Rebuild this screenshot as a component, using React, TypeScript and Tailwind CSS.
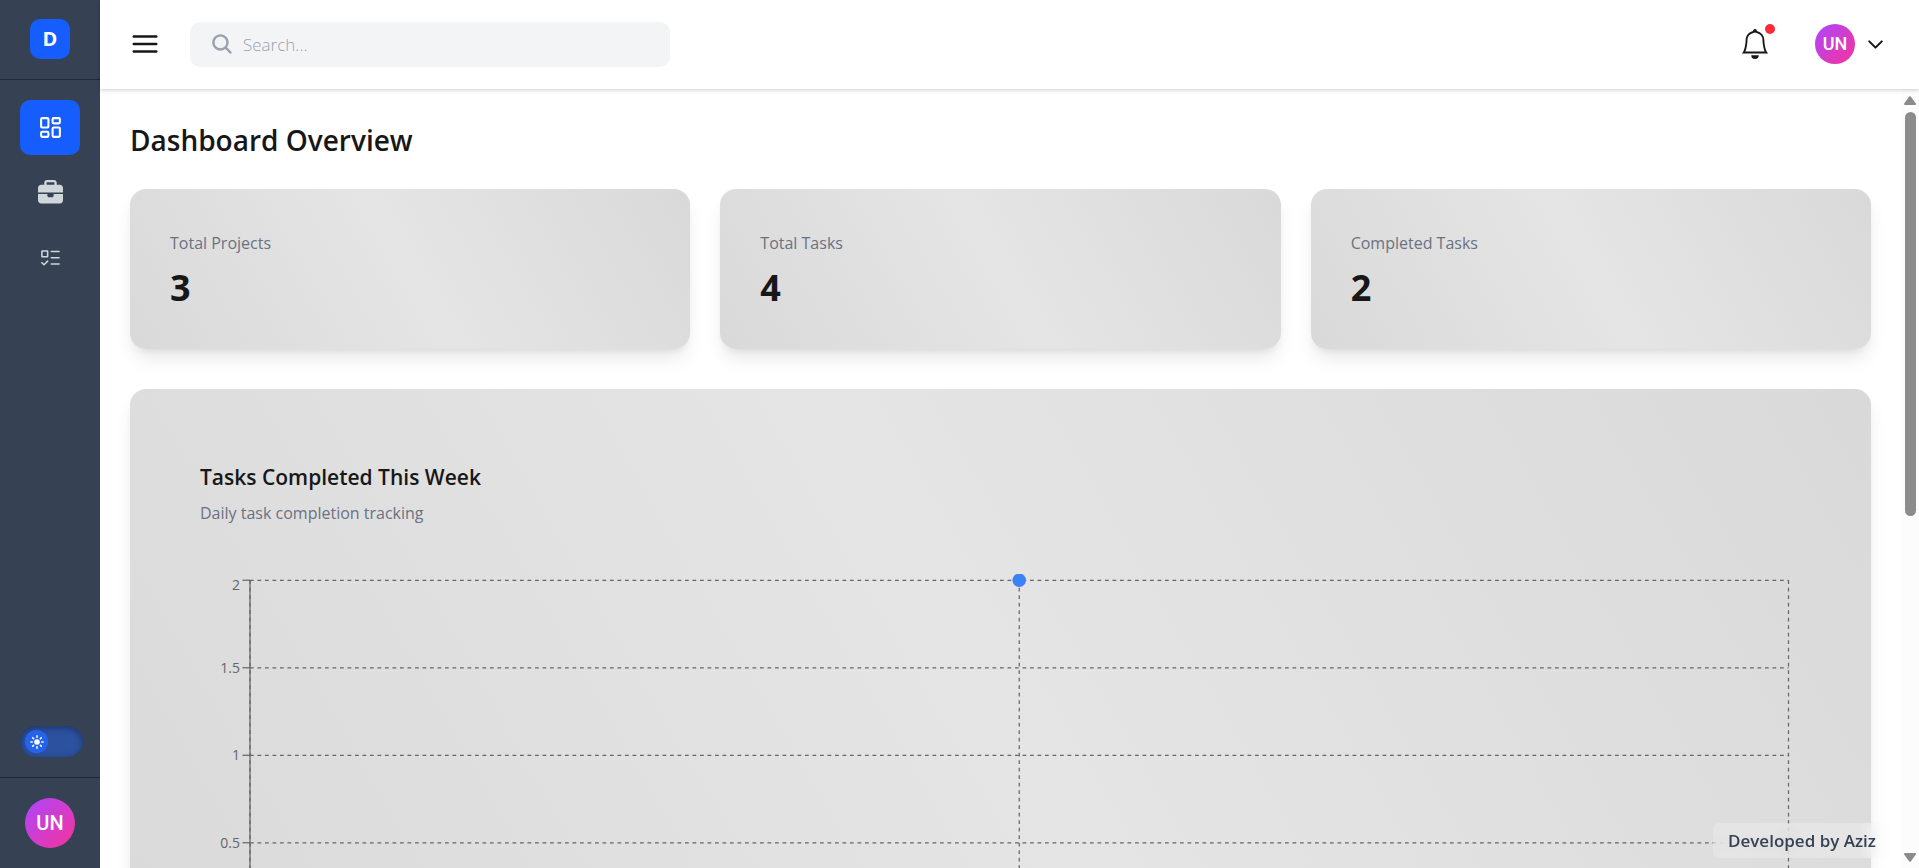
import { useEffect, useRef, useState } from 'react';
import { BsBell } from 'react-icons/bs';
import { FaBriefcase } from 'react-icons/fa6';
import { FiChevronDown, FiMenu } from 'react-icons/fi';
import { GoTasklist } from 'react-icons/go';
import { IoSearch } from 'react-icons/io5';
import { LuLayoutDashboard } from 'react-icons/lu';

const navItems = [
  { label: 'Dashboard', href: '#dashboard', icon: <LuLayoutDashboard size={25} />, active: true },
  { label: 'Projects', href: '#projects', icon: <FaBriefcase size={25} />, active: false },
  { label: 'Tasks', href: '#tasks', icon: <GoTasklist size={25} />, active: false },
];

const stats = [
  { label: 'Total Projects', value: 3 },
  { label: 'Total Tasks', value: 4 },
  { label: 'Completed Tasks', value: 2 },
];

const cardClass =
  'rounded-2xl bg-[linear-gradient(60deg,#d9d9d9,#e5e5e5,#d9d9d9)] shadow-[0_12px_19px_-4px_rgba(0,0,0,0.1),0_5px_8px_-5px_rgba(0,0,0,0.1)]';

const avatarClass =
  "flex items-center justify-center rounded-full bg-[linear-gradient(135deg,#ad46ff,#f6339a)] font-['Roboto'] font-medium text-white";

function SunIcon() {
  return (
    <svg width="14" height="14" viewBox="0 0 24 24" stroke="white" strokeWidth="2.6" strokeLinecap="round" aria-hidden="true">
      <circle cx="12" cy="12" r="4.8" fill="white" stroke="none" />
      <path d="M12 1.5v2.4M12 20.1v2.4M1.5 12h2.4M20.1 12h2.4M4.6 4.6l1.6 1.6M17.8 17.8l1.6 1.6M4.6 19.4l1.6-1.6M17.8 6.2l1.6-1.6" />
    </svg>
  );
}

function Sidebar() {
  return (
    <aside className="flex w-[100px] shrink-0 flex-col bg-gray-700">
      <div className="flex h-20 shrink-0 items-center justify-center border-b border-gray-800 pb-px">
        <div className="flex size-10 items-center justify-center rounded-[10px] bg-[#155dfc] text-xl font-bold text-white">
          D
        </div>
      </div>

      <nav className="flex flex-1 flex-col items-center gap-[10px] py-5">
        {navItems.map((item) => (
          <a
            key={item.label}
            href={item.href}
            aria-label={item.label}
            className={`flex h-[55px] w-[60px] items-center justify-center rounded-[10px] ${
              item.active ? 'bg-[#155dfc] text-white' : 'text-gray-300'
            }`}
          >
            {item.icon}
          </a>
        ))}
      </nav>

      {/* Theme toggle */}
      <div className="px-5 pb-5">
        <label className="flex h-[31px] w-[63px] cursor-pointer items-center rounded-full bg-[#2c519f] px-[5px] shadow-[inset_0_2px_7px_rgba(0,0,0,0.35)]">
          <input type="checkbox" aria-label="Toggle theme" className="peer sr-only" />
          <span className="flex size-[23px] items-center justify-center rounded-full bg-[#2563eb] transition-transform peer-checked:translate-x-[30px]">
            <SunIcon />
          </span>
        </label>
      </div>

      <div className="flex justify-center border-t border-gray-800 py-5">
        <div className={`${avatarClass} size-[50px] text-xl`}>UN</div>
      </div>
    </aside>
  );
}

function Header() {
  return (
    <header className="relative z-10 flex h-[89px] shrink-0 items-center justify-between bg-white pr-[31px] pb-px pl-[30px] shadow-[0_1px_4px_rgba(0,0,0,0.2)]">
      <div className="flex items-center gap-[30px]">
        <button type="button" aria-label="Toggle menu">
          <FiMenu size={30} />
        </button>
        <label className="flex h-[45px] w-[480px] items-center gap-[9px] rounded-[10px] bg-gray-100 pl-5">
          <IoSearch size={24} className="text-gray-400" />
          <input
            type="text"
            aria-label="Search"
            placeholder="Search..."
            className="min-w-0 flex-1 bg-transparent pt-0.5 text-[17px] font-light outline-none placeholder:text-gray-400"
          />
        </label>
      </div>

      <div className="flex items-center gap-[45px]">
        <button type="button" aria-label="Notifications" className="relative">
          <BsBell size={30} />
          <span className="absolute -top-[5px] -right-[5px] size-[10px] rounded-full bg-[#fb2c36]" />
        </button>
        <button type="button" aria-label="Account menu" className="flex items-center gap-2">
          <span className={`${avatarClass} size-10 text-lg`}>UN</span>
          <FiChevronDown size={25} />
        </button>
      </div>
    </header>
  );
}

function WeekChart() {
  const ref = useRef<HTMLDivElement>(null);
  const [width, setWidth] = useState(1601);

  useEffect(() => {
    const el = ref.current;
    if (!el) return;
    setWidth(el.clientWidth);
    const observer = new ResizeObserver(() => setWidth(el.clientWidth));
    observer.observe(el);
    return () => observer.disconnect();
  }, []);

  const left = 50;
  const right = width - 12.5;
  const top = 6.25;
  const bottom = 356.25;
  const middle = (left + right) / 2;
  const ticks = [2, 1.5, 1, 0.5];
  const y = (value: number) => bottom - (value / 2) * (bottom - top);

  return (
    <div ref={ref} className="mt-[47px] h-[400px]">
      <svg width={width} height="400" stroke="#666" strokeWidth="1.25" className="block">
        {/* Grid */}
        <g strokeDasharray="3.75 3.75">
          {ticks.map((t) => (
            <line key={t} x1={left} x2={right} y1={y(t)} y2={y(t)} />
          ))}
          {[left, middle, right].map((x) => (
            <line key={x} x1={x} x2={x} y1={top} y2={bottom} />
          ))}
        </g>

        {/* Axes */}
        <line x1={left} x2={left} y1={top} y2={bottom} />
        <line x1={left} x2={right} y1={bottom} y2={bottom} />
        {ticks.map((t) => (
          <g key={t}>
            <line x1={left - 7.5} x2={left} y1={y(t)} y2={y(t)} />
            <text
              x={left - 10}
              y={Math.max(y(t), 11) + 5}
              textAnchor="end"
              stroke="none"
              fill="#666"
              className="text-sm"
            >
              {t}
            </text>
          </g>
        ))}

        <circle cx={middle} cy={y(2)} r="6.75" fill="#3b82f6" stroke="none" />
      </svg>
    </div>
  );
}

function Scrollbar() {
  return (
    <div aria-hidden="true" className="flex w-[18px] shrink-0 flex-col items-center bg-[#fcfcfc] pt-[7px] pb-[6px]">
      <svg width="12" height="9" viewBox="0 0 12 9" fill="#8b8b8b" stroke="#8b8b8b" strokeWidth="2" strokeLinejoin="round">
        <path d="M6 1.2 11 8H1z" />
      </svg>
      <div className="min-h-0 w-full flex-1 px-1 py-[7px]">
        <div className="mx-auto h-[55%] w-[11px] rounded-full bg-[#8b8b8b]" />
      </div>
      <svg width="12" height="9" viewBox="0 0 12 9" fill="#8b8b8b" stroke="#8b8b8b" strokeWidth="2" strokeLinejoin="round">
        <path d="M6 7.8 1 1h10z" />
      </svg>
    </div>
  );
}

export default function App() {
  return (
    <div className="flex h-screen overflow-hidden bg-white font-['Open_Sans',sans-serif] text-[#171717]">
      <Sidebar />

      <div className="flex min-w-0 flex-1 flex-col">
        <Header />

        <div className="flex min-h-0 flex-1">
          <main className="min-w-0 flex-1 overflow-y-auto p-[30px] [scrollbar-width:none]">
            <h1 className="mb-7 text-[28px] leading-[42px] font-semibold">Dashboard Overview</h1>

            <div className="grid grid-cols-3 gap-[30px]">
              {stats.map((stat) => (
                <div key={stat.label} className={`${cardClass} p-10`}>
                  <p className="text-base leading-7 text-gray-500">{stat.label}</p>
                  <p className="mt-[10px] text-4xl leading-[42px] font-bold">{stat.value}</p>
                </div>
              ))}
            </div>

            <section className={`${cardClass} mt-10 p-[70px]`}>
              <h2 className="text-[21px] leading-9 font-semibold">Tasks Completed This Week</h2>
              <p className="mt-1 text-base leading-7 text-gray-500">Daily task completion tracking</p>
              <WeekChart />
            </section>
          </main>
          <Scrollbar />
        </div>
      </div>

      {/* Credit */}
      <div className="fixed right-[28px] bottom-[10px] z-20 flex h-[35px] items-center rounded-md bg-white/25 px-[15px] text-[17px] font-semibold text-gray-700 backdrop-blur-sm">
        Developed by Aziz
      </div>
    </div>
  );
}
